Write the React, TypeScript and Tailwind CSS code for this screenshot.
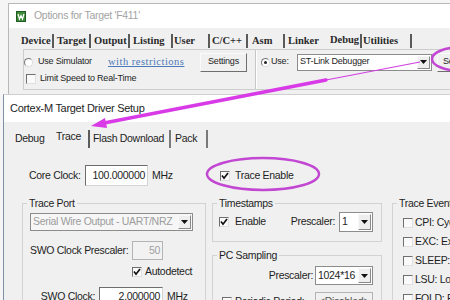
import React from "react";

const Check = ({ on = false }: { on?: boolean }) => (
  <span className="relative block w-[10px] h-[10px] shrink-0 border border-t-[#6f6f6f] border-l-[#6f6f6f] border-r-[#e0e0e0] border-b-[#e0e0e0] bg-[#fafafa]">
    {on && (
      <svg className="absolute left-0 top-0" width="8" height="8" viewBox="0 0 8 8">
        <path d="M1 3.6 L3 6.2 L7 1" fill="none" stroke="#111" strokeWidth="1.7" />
      </svg>
    )}
  </span>
);

const Radio = ({ on = false }: { on?: boolean }) => (
  <span className="relative block w-[9px] h-[9px] shrink-0 rounded-full border border-t-[#777] border-l-[#777] border-r-[#dcdcdc] border-b-[#dcdcdc] bg-white">
    {on && <span className="absolute left-[2px] top-[2px] w-[3px] h-[3px] rounded-full bg-[#222]" />}
  </span>
);

const DropBtn = () => (
  <span className="flex items-center justify-center w-[13px] my-[1px] mr-[1px] border border-t-[#f8f8f8] border-l-[#f8f8f8] border-r-[#8a8a8a] border-b-[#8a8a8a] bg-[#eeeeee]">
    <svg width="7" height="4" viewBox="0 0 7 4">
      <path d="M0 0h7L3.5 4z" fill="#111" />
    </svg>
  </span>
);

const Combo = ({ text, className, dim = false }: { text: string; className: string; dim?: boolean }) => (
  <div className={`flex items-stretch shrink-0 border border-[#8c8c8c] ${dim ? "bg-[#f6f6f6]" : "bg-white"} ${className}`}>
    <span className={`flex-1 flex items-center pl-[2px] overflow-hidden whitespace-nowrap ${dim ? "text-[#9c9c9c]" : ""}`}>
      {text}
    </span>
    <DropBtn />
  </div>
);

const Field = ({ text, className, dim = false }: { text: string; className: string; dim?: boolean }) => (
  <div
    className={`flex items-center justify-end pr-[2px] shrink-0 border ${
      dim
        ? "border-[#b4b4b4] bg-[#f2f2f2] text-[#a0a0a0]"
        : "border-t-[#6e6e6e] border-l-[#6e6e6e] border-r-[#d4d4d4] border-b-[#d4d4d4] bg-white"
    } ${className}`}
  >
    {text}
  </div>
);

const KeilIcon = () => (
  <svg width="10" height="11" viewBox="0 0 10 11">
    <rect x="0.5" y="0.5" width="9" height="10" fill="#3f8b3a" stroke="#1f5a22" />
    <path d="M2 3 L3.5 8 L5 4.5 L6.5 8 L8 3" fill="none" stroke="#fff" strokeWidth="1.2" />
  </svg>
);

const backTabs = [
  { label: "Device", cls: "w-[32px] pl-[1px]" },
  { label: "Target", cls: "w-[35px] pl-[3px]" },
  { label: "Output", cls: "w-[37px] pl-[3px]" },
  { label: "Listing", cls: "w-[41px] pl-[3px]" },
  { label: "User", cls: "w-[35px] pl-[1px]" },
  { label: "C/C++", cls: "w-[36px] pl-[2px]" },
  { label: "Asm", cls: "w-[35px] pl-[4px]" },
];

const events = [
  "CPI: Cycles per Instruction",
  "EXC: Exception overhead",
  "SLEEP: Sleep Cycles",
  "LSU: Load Store Unit Cycles",
  "FOLD: Folded Instructions",
];

export default function App() {
  return (
    <div className="relative w-[450px] h-[300px] overflow-hidden bg-[#f5f5f5] text-[#1e1e1e] font-['Liberation_Sans',Arial,sans-serif] tracking-[-0.3px]">
      {/* Options for Target window (behind) */}
      <div className="h-[94px] pl-[8px] pt-[3px]">
        <div className="h-full border-l border-t border-[#b8b8b8] bg-[#f0f0f0] overflow-hidden">
          <div className="h-[24px] bg-white flex items-center pl-[7px]">
            <KeilIcon />
            <span className="ml-[8px] text-[10.5px] text-[#a3a3a3] whitespace-nowrap">Options for Target 'F411'</span>
          </div>

          <div className="h-[21px] pt-[5px] pl-[11px] flex items-center whitespace-nowrap font-['Liberation_Serif',serif] font-bold text-[10.5px] tracking-normal text-[#2a2a2a]">
            {backTabs.map((t) => (
              <React.Fragment key={t.label}>
                <span className={`shrink-0 ${t.cls}`}>{t.label}</span>
                <span className="shrink-0 w-[2px] h-[14px] bg-[#5a5a5a]" />
              </React.Fragment>
            ))}
            <span className="shrink-0 w-[75px] pl-[3px] flex items-center">
              <span>Linker</span>
              <span className="ml-[11px] -mt-[3px]">Debug</span>
            </span>
            <span className="shrink-0 w-[2px] h-[14px] bg-[#5a5a5a]" />
            <span className="shrink-0 w-[48px] pl-[1px]">Utilities</span>
            <span className="shrink-0 w-[2px] h-[14px] bg-[#5a5a5a]" />
          </div>

          <div className="ml-[14px] h-[41px] border-l border-t border-b border-[#cdcdcd] flex text-[9px] tracking-[-0.2px]">
            <div className="w-[231px] shrink-0">
              <div className="mt-[2px] h-[20px] flex items-center">
                <Radio />
                <span className="ml-[5px] w-[70px] shrink-0 whitespace-nowrap">Use Simulator</span>
                <span className="w-[92px] shrink-0 whitespace-nowrap font-['Liberation_Serif',serif] text-[10.5px] tracking-[0.5px] text-[#4a78b8] underline">
                  with restrictions
                </span>
                <span className="w-[47px] h-[19px] shrink-0 flex items-center justify-center border border-t-[#fbfbfb] border-l-[#fbfbfb] border-r-[#6e6e6e] border-b-[#6e6e6e] bg-[#f0f0f0]">
                  Settings
                </span>
              </div>
              <div className="h-[14px] flex items-center pl-[2px]">
                <Check />
                <span className="ml-[4px] whitespace-nowrap">Limit Speed to Real-Time</span>
              </div>
            </div>
            <div className="flex-1 border-l border-[#c6c6c6] shadow-[inset_1px_0_0_#ffffff]">
              <div className="mt-[2px] h-[20px] flex items-center pl-[5px]">
                <Radio on />
                <span className="w-[27px] shrink-0 pl-[1px]">Use:</span>
                <Combo text="ST-Link Debugger" className="w-[135px] h-[17px]" />
                <span className="ml-[5px] w-[40px] h-[19px] shrink-0 flex items-center pl-[5px] border border-t-[#fbfbfb] border-l-[#fbfbfb] border-r-[#6e6e6e] border-b-[#6e6e6e] bg-[#f0f0f0] whitespace-nowrap">
                  Settings
                </span>
              </div>
            </div>
          </div>
        </div>
      </div>

      {/* Cortex-M Target Driver Setup window */}
      <div className="h-[206px] pl-[3px]">
        <div className="h-full border-l border-t border-l-[#7f90a4] border-t-[#cfcfcf] bg-[#f0f0f0] overflow-hidden flex flex-col text-[10.5px]">
          <div className="h-[27px] shrink-0 bg-white flex items-center pl-[6px] whitespace-nowrap text-[11px]">
            Cortex-M Target Driver Setup
          </div>

          <div className="h-[27px] shrink-0 flex items-end whitespace-nowrap">
            <span className="w-[46px] h-[20px] shrink-0 flex items-center pl-[11px]">Debug</span>
            <span className="w-[38px] h-[20px] shrink-0 flex items-center pl-[6px] pb-[4px]">Trace</span>
            <span className="w-[2px] h-[18px] mb-[1px] shrink-0 bg-[#5c5c5c]" />
            <span className="w-[79px] h-[20px] shrink-0 flex items-center pl-[3px]">Flash Download</span>
            <span className="w-[2px] h-[18px] mb-[1px] shrink-0 bg-[#7a7a7a]" />
            <span className="w-[35px] h-[20px] shrink-0 flex items-center pl-[4px]">Pack</span>
            <span className="w-[2px] h-[18px] mb-[1px] shrink-0 bg-[#7a7a7a]" />
          </div>

          {/* Core clock row */}
          <div className="mt-[16px] h-[21px] shrink-0 flex items-center whitespace-nowrap">
            <span className="ml-[25px] w-[56px] shrink-0">Core Clock:</span>
            <Field text="100.000000" className="w-[63px] h-full" />
            <span className="ml-[4px] w-[68px] shrink-0">MHz</span>
            <Check on />
            <span className="ml-[5px]">Trace Enable</span>
          </div>

          {/* Group boxes */}
          <div className="mt-[10px] flex items-start shrink-0 whitespace-nowrap">
            <fieldset className="ml-[18px] w-[184px] h-[120px] min-w-0 shrink-0 border border-[#d3d3d3]">
              <legend className="ml-[4px] px-[2px] leading-[14px]">Trace Port</legend>
              <Combo text="Serial Wire Output - UART/NRZ" className="mt-[3px] ml-[7px] w-[163px] h-[18px]" dim />
              <div className="mt-[10px] h-[19px] flex items-center">
                <span className="ml-[7px] w-[98px] shrink-0">SWO Clock Prescaler:</span>
                <Field text="50" className="ml-[4px] w-[31px] h-full" dim />
              </div>
              <div className="mt-[5px] h-[14px] flex items-center">
                <span className="ml-[109px]">
                  <Check on />
                </span>
                <span className="ml-[3px]">Autodetect</span>
              </div>
              <div className="mt-[8px] h-[20px] flex items-center">
                <span className="ml-[15px] w-[57px] shrink-0 text-right">SWO Clock:</span>
                <Field text="2.000000" className="ml-[4px] w-[64px] h-full" />
                <span className="ml-[4px]">MHz</span>
              </div>
            </fieldset>

            <div className="ml-[6px] w-[170px] shrink-0 flex flex-col">
              <fieldset className="h-[46px] min-w-0 border border-[#d3d3d3]">
                <legend className="ml-[4px] px-[2px] leading-[14px]">Timestamps</legend>
                <div className="mt-[2px] h-[20px] flex items-center pr-[8px]">
                  <span className="ml-[6px]">
                    <Check on />
                  </span>
                  <span className="ml-[6px] flex-1">Enable</span>
                  <span className="mr-[4px]">Prescaler:</span>
                  <Combo text="1" className="w-[34px] h-full" />
                </div>
              </fieldset>
              <fieldset className="mt-[6px] h-[70px] min-w-0 border border-[#d3d3d3]">
                <legend className="ml-[4px] px-[2px] leading-[14px]">PC Sampling</legend>
                <div className="mt-[4px] h-[19px] flex items-center justify-end pr-[8px]">
                  <span className="mr-[2px]">Prescaler:</span>
                  <Combo text="1024*16" className="w-[58px] h-full" />
                </div>
                <div className="mt-[7px] h-[19px] flex items-center pr-[8px]">
                  <span className="ml-[9px]">
                    <Check />
                  </span>
                  <span className="ml-[3px] flex-1">Periodic Period:</span>
                  <span className="w-[58px] h-full shrink-0 flex items-center justify-center border border-[#b4b4b4] text-[#555]">
                    &lt;Disabled&gt;
                  </span>
                </div>
              </fieldset>
            </div>

            <fieldset className="ml-[10px] w-[200px] h-[120px] min-w-0 shrink-0 border border-[#d3d3d3]">
              <legend className="ml-[4px] px-[2px] leading-[14px]">Trace Events</legend>
              <div className="mt-[3px]">
                {events.map((e) => (
                  <div key={e} className="h-[19px] flex items-center">
                    <span className="ml-[10px]">
                      <Check />
                    </span>
                    <span className="ml-[2px]">{e}</span>
                  </div>
                ))}
              </div>
            </fieldset>
          </div>
        </div>
      </div>

      {/* magenta annotations */}
      <svg className="absolute inset-0 pointer-events-none" width="450" height="300" viewBox="0 0 450 300">
        <ellipse cx="462" cy="59" rx="30" ry="12" fill="none" stroke="#c247d2" strokeWidth="2.5" />
        <ellipse cx="263" cy="174" rx="56" ry="16" fill="none" stroke="#c247d2" strokeWidth="2.5" />
        <line x1="420" y1="62" x2="326" y2="80" stroke="#d23ee2" strokeWidth="1.2" />
        <line x1="326" y1="80" x2="104" y2="123" stroke="#d93ae7" strokeWidth="3.5" strokeLinecap="round" />
        <polygon points="91,126 105,118 107,128" fill="#d93ae7" />
      </svg>
    </div>
  );
}
